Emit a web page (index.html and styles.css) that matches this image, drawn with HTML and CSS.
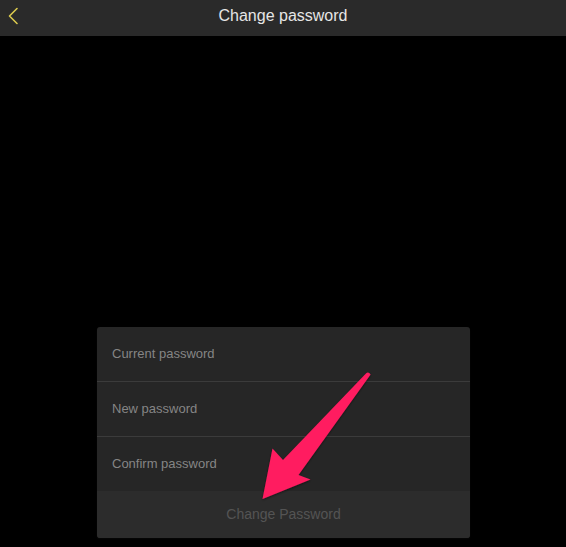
FILE: index.html
```html
<!DOCTYPE html>
<html>
<head>
<meta charset="utf-8">
<link rel="stylesheet" href="styles.css">
</head>
<body>
<header class="topbar">
  <button class="back" aria-label="Back">
    <svg width="12" height="18" viewBox="0 0 12 18"><path d="M10 1.5 L2.5 9 L10 16.5" fill="none" stroke="#d9c84e" stroke-width="1.6" stroke-linecap="round" stroke-linejoin="round"/></svg>
  </button>
  <h1 class="title">Change password</h1>
</header>
<main class="content">
  <form class="card">
    <div class="field"><span class="placeholder">Current password</span></div>
    <div class="field"><span class="placeholder">New password</span></div>
    <div class="field"><span class="placeholder">Confirm password</span></div>
    <div class="submit">Change Password</div>
  </form>
</main>
<svg class="arrow" width="566" height="547" viewBox="0 0 566 547">
  <defs>
    <filter id="sh" x="-20%" y="-20%" width="140%" height="140%">
      <feDropShadow dx="0" dy="1" stdDeviation="1.2" flood-color="#000" flood-opacity="0.5"/>
    </filter>
  </defs>
  <path filter="url(#sh)" fill="#ff1c60" d="M366.2 373.2 Q368.5 371.5 370.6 374.4 L298.5 475 L310.5 479.5 L262.5 499 L272.5 448.5 L283 460 Z"/>
</svg>
</body>
</html>
```
FILE: styles.css
```css
* { box-sizing: border-box; }
html, body { margin: 0; padding: 0; }
body {
  background: #000;
  width: 566px;
  height: 547px;
  overflow: hidden;
  font-family: "Liberation Sans", Arial, sans-serif;
  position: relative;
}
.topbar {
  height: 36px;
  background: #2a2a2a;
  display: flex;
  align-items: center;
  justify-content: center;
  position: relative;
}
.back {
  position: absolute;
  left: 6px;
  top: 6px;
  background: none;
  border: 0;
  padding: 0;
  width: 14px;
  height: 20px;
  display: flex;
  align-items: center;
  justify-content: center;
}
.title {
  margin: 0;
  font-size: 16px;
  font-weight: normal;
  color: #e6e6e6;
  line-height: 30px;
  margin-top: -5px;
}
.content {
  display: flex;
  justify-content: center;
  padding-top: 291px;
  padding-left: 1px;
}
.card {
  margin: 0;
  width: 373px;
  background: #262626;
  border-radius: 3px;
  overflow: hidden;
  display: flex;
  flex-direction: column;
  box-shadow: 0 1px 2px rgba(255,255,255,0.03);
}
.field {
  height: 55px;
  border-bottom: 1px solid #3b3b3b;
  display: flex;
  align-items: center;
  padding-left: 15px;
  padding-bottom: 2px;
}
.field:nth-child(3) {
  height: 54px;
  border-bottom: 0;
}
.placeholder {
  font-size: 13px;
  color: #858585;
}
.submit {
  height: 47px;
  background: #2c2c2c;
  display: flex;
  align-items: center;
  justify-content: center;
  font-size: 14px;
  color: #545454;
  padding-bottom: 1px;
}
.arrow {
  position: absolute;
  left: 0;
  top: 0;
  pointer-events: none;
}
```
